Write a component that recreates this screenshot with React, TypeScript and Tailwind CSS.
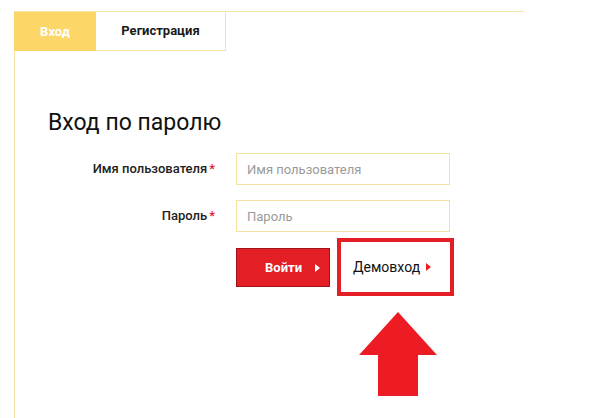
import React from "react";

const Caret = ({ className }: { className: string }) => (
  <svg width="5" height="8" viewBox="0 0 5 8" className={className}>
    <path d="M0 0L5 4L0 8Z" fill="currentColor" />
  </svg>
);

const App = () => {
  return (
    <div
      className="w-[594px] h-[418px] bg-white overflow-hidden pt-[11px] pl-[14px]"
      style={{ fontFamily: "Roboto, 'Open Sans', sans-serif" }}
    >
      {/* Tabs */}
      <div className="w-[510px] border-t border-[#f7e3a6] flex">
        <div className="w-[82px] h-[39px] bg-[#fcd667] flex items-center justify-center text-[13px] font-bold text-white">
          Вход
        </div>
        <div className="w-[130px] h-[39px] bg-white border-r border-b border-[#f7e3a6] flex items-center justify-center text-[13px] font-bold text-[#1a1a1a]">
          Регистрация
        </div>
      </div>

      {/* Panel */}
      <div className="border-l border-[#f7e3a6] h-[368px] pl-[33px] pt-[58px]">
        <h1 className="text-[23px] leading-[28px] text-[#111] mb-[16px]">
          Вход по паролю
        </h1>

        <div className="flex flex-col gap-[15px]">
          <div className="flex items-center">
            <label className="w-[188px] text-right text-[13px] font-medium text-[#222] pr-[21px]">
              Имя пользователя<span className="text-[#e3202a] ml-[2px]">*</span>
            </label>
            <input
              className="w-[214px] h-[32px] border border-[#f5e29e] px-[10px] text-[13px] outline-none placeholder:text-[#9a9a9a]"
              placeholder="Имя пользователя"
            />
          </div>
          <div className="flex items-center">
            <label className="w-[188px] text-right text-[13px] font-medium text-[#222] pr-[21px]">
              Пароль<span className="text-[#e3202a] ml-[2px]">*</span>
            </label>
            <input
              className="w-[214px] h-[32px] border border-[#f5e29e] px-[10px] text-[13px] outline-none placeholder:text-[#9a9a9a]"
              placeholder="Пароль"
              type="text"
            />
          </div>
        </div>

        <div className="flex items-start ml-[188px] mt-[6px]">
          <button className="mt-[10px] w-[94px] h-[39px] bg-[#e31e24] border border-[#9c1419] flex items-center justify-end pr-[9px] gap-[13px] text-white text-[13px] font-bold">
            Войти
            <Caret className="text-white" />
          </button>
          <div className="flex flex-col items-center ml-[7px]">
            <div className="w-[117px] h-[58px] border-[4px] border-[#e31e24] flex items-center pl-[12px] gap-[6px] text-[14px] text-[#111]">
              Демовход
              <Caret className="text-[#e31e24]" />
            </div>
            <svg width="80" height="86" viewBox="0 0 80 86" className="mt-[15px] ml-[4px]">
              <path d="M40 1L79 44L60 44L60 85L20 85L20 44L1 44Z" fill="#ed1c24" />
            </svg>
          </div>
        </div>
      </div>
    </div>
  );
};

export default App;
